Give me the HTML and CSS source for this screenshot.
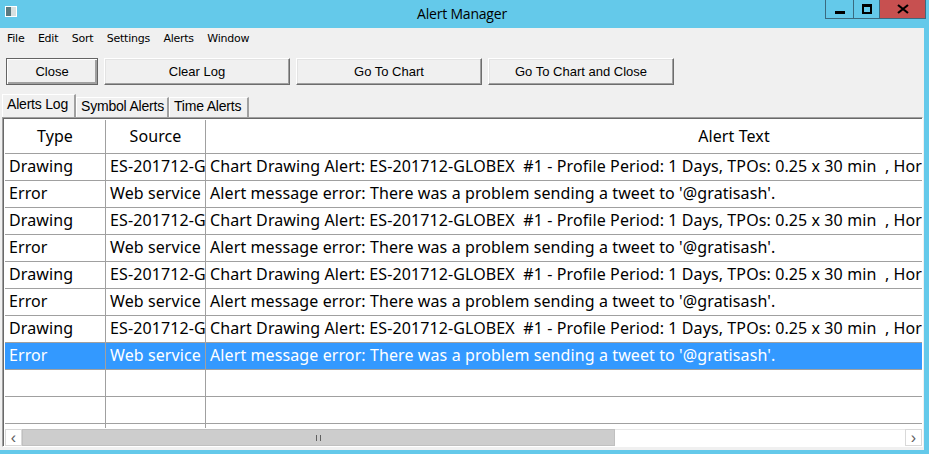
FILE: index.html
```html
<!DOCTYPE html>
<html>
<head>
<meta charset="utf-8">
<title>Alert Manager</title>
<link rel="stylesheet" href="styles.css">
</head>
<body>
<div class="window">
  <div class="titlebar">
    <span class="appicon"></span>
    <span class="title">Alert Manager</span>
    <div class="wbtns">
      <span class="wbtn min"><i></i></span>
      <span class="wbtn max"><i></i></span>
      <span class="wbtn close">
        <svg width="12" height="10" viewBox="0 0 12 10"><path d="M1 1 L11 9 M11 1 L1 9" stroke="#000" stroke-width="2.2"/></svg>
      </span>
    </div>
  </div>
  <div class="client">
    <div class="menubar">
      <span>File</span><span>Edit</span><span>Sort</span><span>Settings</span><span>Alerts</span><span>Window</span>
    </div>
    <div class="toolbar">
      <button class="btn b-close">Close</button>
      <button class="btn b-wide">Clear Log</button>
      <button class="btn b-wide">Go To Chart</button>
      <button class="btn b-wide">Go To Chart and Close</button>
    </div>
    <div class="tabs">
      <span class="tab active t1">Alerts Log</span>
      <span class="tab t2">Symbol Alerts</span>
      <span class="tab t3">Time Alerts</span>
    </div>
    <div class="panel">
      <div class="grid">
        <div class="row head"><div class="c c1">Type</div><div class="c c2">Source</div><div class="c c3">Alert Text</div></div>
        <div class="row"><div class="c c1 l">Drawing</div><div class="c c2 l">ES-201712-GLOBEX</div><div class="c c3 l">Chart Drawing Alert: ES-201712-GLOBEX&nbsp; #1 - Profile Period: 1 Days, TPOs: 0.25 x 30 min&nbsp; , Horizontal line</div></div>
        <div class="row"><div class="c c1 l">Error</div><div class="c c2 l">Web service</div><div class="c c3 l">Alert message error: There was a problem sending a tweet to '@gratisash'.</div></div>
        <div class="row"><div class="c c1 l">Drawing</div><div class="c c2 l">ES-201712-GLOBEX</div><div class="c c3 l">Chart Drawing Alert: ES-201712-GLOBEX&nbsp; #1 - Profile Period: 1 Days, TPOs: 0.25 x 30 min&nbsp; , Horizontal line</div></div>
        <div class="row"><div class="c c1 l">Error</div><div class="c c2 l">Web service</div><div class="c c3 l">Alert message error: There was a problem sending a tweet to '@gratisash'.</div></div>
        <div class="row"><div class="c c1 l">Drawing</div><div class="c c2 l">ES-201712-GLOBEX</div><div class="c c3 l">Chart Drawing Alert: ES-201712-GLOBEX&nbsp; #1 - Profile Period: 1 Days, TPOs: 0.25 x 30 min&nbsp; , Horizontal line</div></div>
        <div class="row"><div class="c c1 l">Error</div><div class="c c2 l">Web service</div><div class="c c3 l">Alert message error: There was a problem sending a tweet to '@gratisash'.</div></div>
        <div class="row"><div class="c c1 l">Drawing</div><div class="c c2 l">ES-201712-GLOBEX</div><div class="c c3 l">Chart Drawing Alert: ES-201712-GLOBEX&nbsp; #1 - Profile Period: 1 Days, TPOs: 0.25 x 30 min&nbsp; , Horizontal line</div></div>
        <div class="row sel"><div class="c c1 l">Error</div><div class="c c2 l">Web service</div><div class="c c3 l">Alert message error: There was a problem sending a tweet to '@gratisash'.</div></div>
        <div class="row"><div class="c c1"></div><div class="c c2"></div><div class="c c3"></div></div>
        <div class="row"><div class="c c1"></div><div class="c c2"></div><div class="c c3"></div></div>
        <div class="row"><div class="c c1"></div><div class="c c2"></div><div class="c c3"></div></div>
      </div>
      <div class="hscroll">
        <span class="arrow">&#8249;</span>
        <span class="thumb"><span class="grip"></span></span>
        <span class="track"></span>
        <span class="arrow">&#8250;</span>
      </div>
    </div>
  </div>
</div>
</body>
</html>
```
FILE: styles.css
```css
html, body { margin: 0; padding: 0; }
body {
  width: 929px; height: 454px; overflow: hidden;
  background: #64c9ea;
  font-family: "Liberation Sans", Arial, sans-serif;
}
.window { width: 924px; height: 450px; display: flex; flex-direction: column; }
.titlebar {
  height: 28px; flex: none; position: relative;
  display: flex; align-items: center; justify-content: center;
}
.title { font-family: "Open Sans", sans-serif; font-size: 14px; color: #000; margin-top: -2px; letter-spacing: -0.2px; }
.appicon {
  position: absolute; left: 5px; top: 6px; width: 10px; height: 9px;
  background: linear-gradient(90deg, #5a7a80 0 5px, #d8e0e0 5px); border: 1px solid #fff;
}
.wbtns { position: absolute; right: -2px; top: 0; display: flex; }
.wbtn { height: 18px; border: 1px solid #3a6a80; border-top: none; display: flex; align-items: center; justify-content: center; }
.wbtn.min { width: 27px; }
.wbtn.min i { display: block; width: 10px; height: 3px; background: #000; margin-top: 6px; }
.wbtn.max { width: 25px; border-left: none; }
.wbtn.max i { display: block; width: 6px; height: 5px; border: 2px solid #000; border-top-width: 3px; }
.wbtn.close { width: 45px; background: #c75050; border-color: #3a6a80; border-left: none; }
.client { flex: 1; background: #f0f0f0; display: flex; flex-direction: column; }
.menubar { height: 19px; display: flex; align-items: center; padding-left: 7px; font-family: "DejaVu Sans", sans-serif; font-size: 11px; color: #000; margin-top: 1px; }
.menubar span { margin-right: 13.5px; letter-spacing: -0.25px; }
.toolbar { display: flex; gap: 6px; padding: 10px 0 0 6px; height: 27px; }
.btn {
  height: 27px; box-sizing: border-box; margin: 0; padding: 0 0 1px 0;
  background: #f0f0f0; font-family: "Liberation Sans", Arial, sans-serif; font-size: 13px; color: #000;
  border: 1px solid; border-color: #fff #6d6d6d #6d6d6d #fff;
  box-shadow: inset -1px -1px 0 #a0a0a0, inset 1px 1px 0 #e3e3e3;
}
.b-close {
  width: 92px; border-color: #646464;
  box-shadow: inset 1px 1px 0 #fff, inset -2px -2px 0 #a0a0a0;
}
.b-wide { width: 186px; }
.tabs { display: flex; padding-left: 2px; margin-top: 9px; height: 23px; align-items: flex-end; font-size: 14px; font-family: "Liberation Sans", Arial, sans-serif; }
.tab {
  height: 20px; box-sizing: border-box; padding: 0 0 0 4px; line-height: 16px; white-space: nowrap;
  border-left: 1px solid #fff; border-top: 1px solid #fff; border-right: 2px solid #a0a0a0;
  letter-spacing: -0.2px;
}
.tab.active { height: 23px; padding-top: 1px; }
.t1 { width: 74px; }
.t2 { width: 93px; }
.t3 { width: 80px; }
.panel {
  margin: 0 0 0 2px; width: 921px; height: 330px; box-sizing: border-box;
  border: 1px solid; border-color: #a0a0a0 #fff #fff #a0a0a0;
  box-shadow: inset 1px 1px 0 #696969;
  background: #fff; padding: 2px 0 0 2px; display: flex; flex-direction: column; overflow: hidden;
}
.grid { flex: none; height: 308px; width: 917px; overflow: hidden; }
.row { display: flex; height: 27px; box-sizing: border-box; border-bottom: 1px solid #a0a0a0; width: max-content; }
.row.head { height: 34px; background: #fff; }
.c {
  flex: none; box-sizing: border-box; border-right: 1px solid #a0a0a0; overflow: hidden; white-space: nowrap;
  font-family: "Noto Sans", "DejaVu Sans", sans-serif; font-size: 16px; color: #000; padding-bottom: 2px;
  display: flex; align-items: center; justify-content: center; letter-spacing: 0.1px;
}
.c.l { justify-content: flex-start; padding-left: 4px; }
.c1 { width: 101px; }
.c2 { width: 100px; }
.c3 { width: 1056px; border-right: none; }
.row.sel { background: #3399ff; }
.row.sel .c { color: #fff; }
.hscroll { display: flex; height: 17px; margin: 1px 0 0 0; width: 917px; }
.arrow {
  width: 17px; box-sizing: border-box; border: 1px solid #d9d9d9; background: #fff;
  font-size: 16px; color: #606060; display: flex; align-items: center; justify-content: center; line-height: 1;
}
.thumb { width: 593px; background: #cdcdcd; border: 1px solid #c0c0c0; box-sizing: border-box; display: flex; align-items: center; justify-content: center; }
.grip { width: 5px; height: 6px; border-left: 1px solid #606060; border-right: 1px solid #606060; box-sizing: border-box; }
.track { flex: 1; background: #fff; border-top: 1px solid #e8e8e8; }
```
